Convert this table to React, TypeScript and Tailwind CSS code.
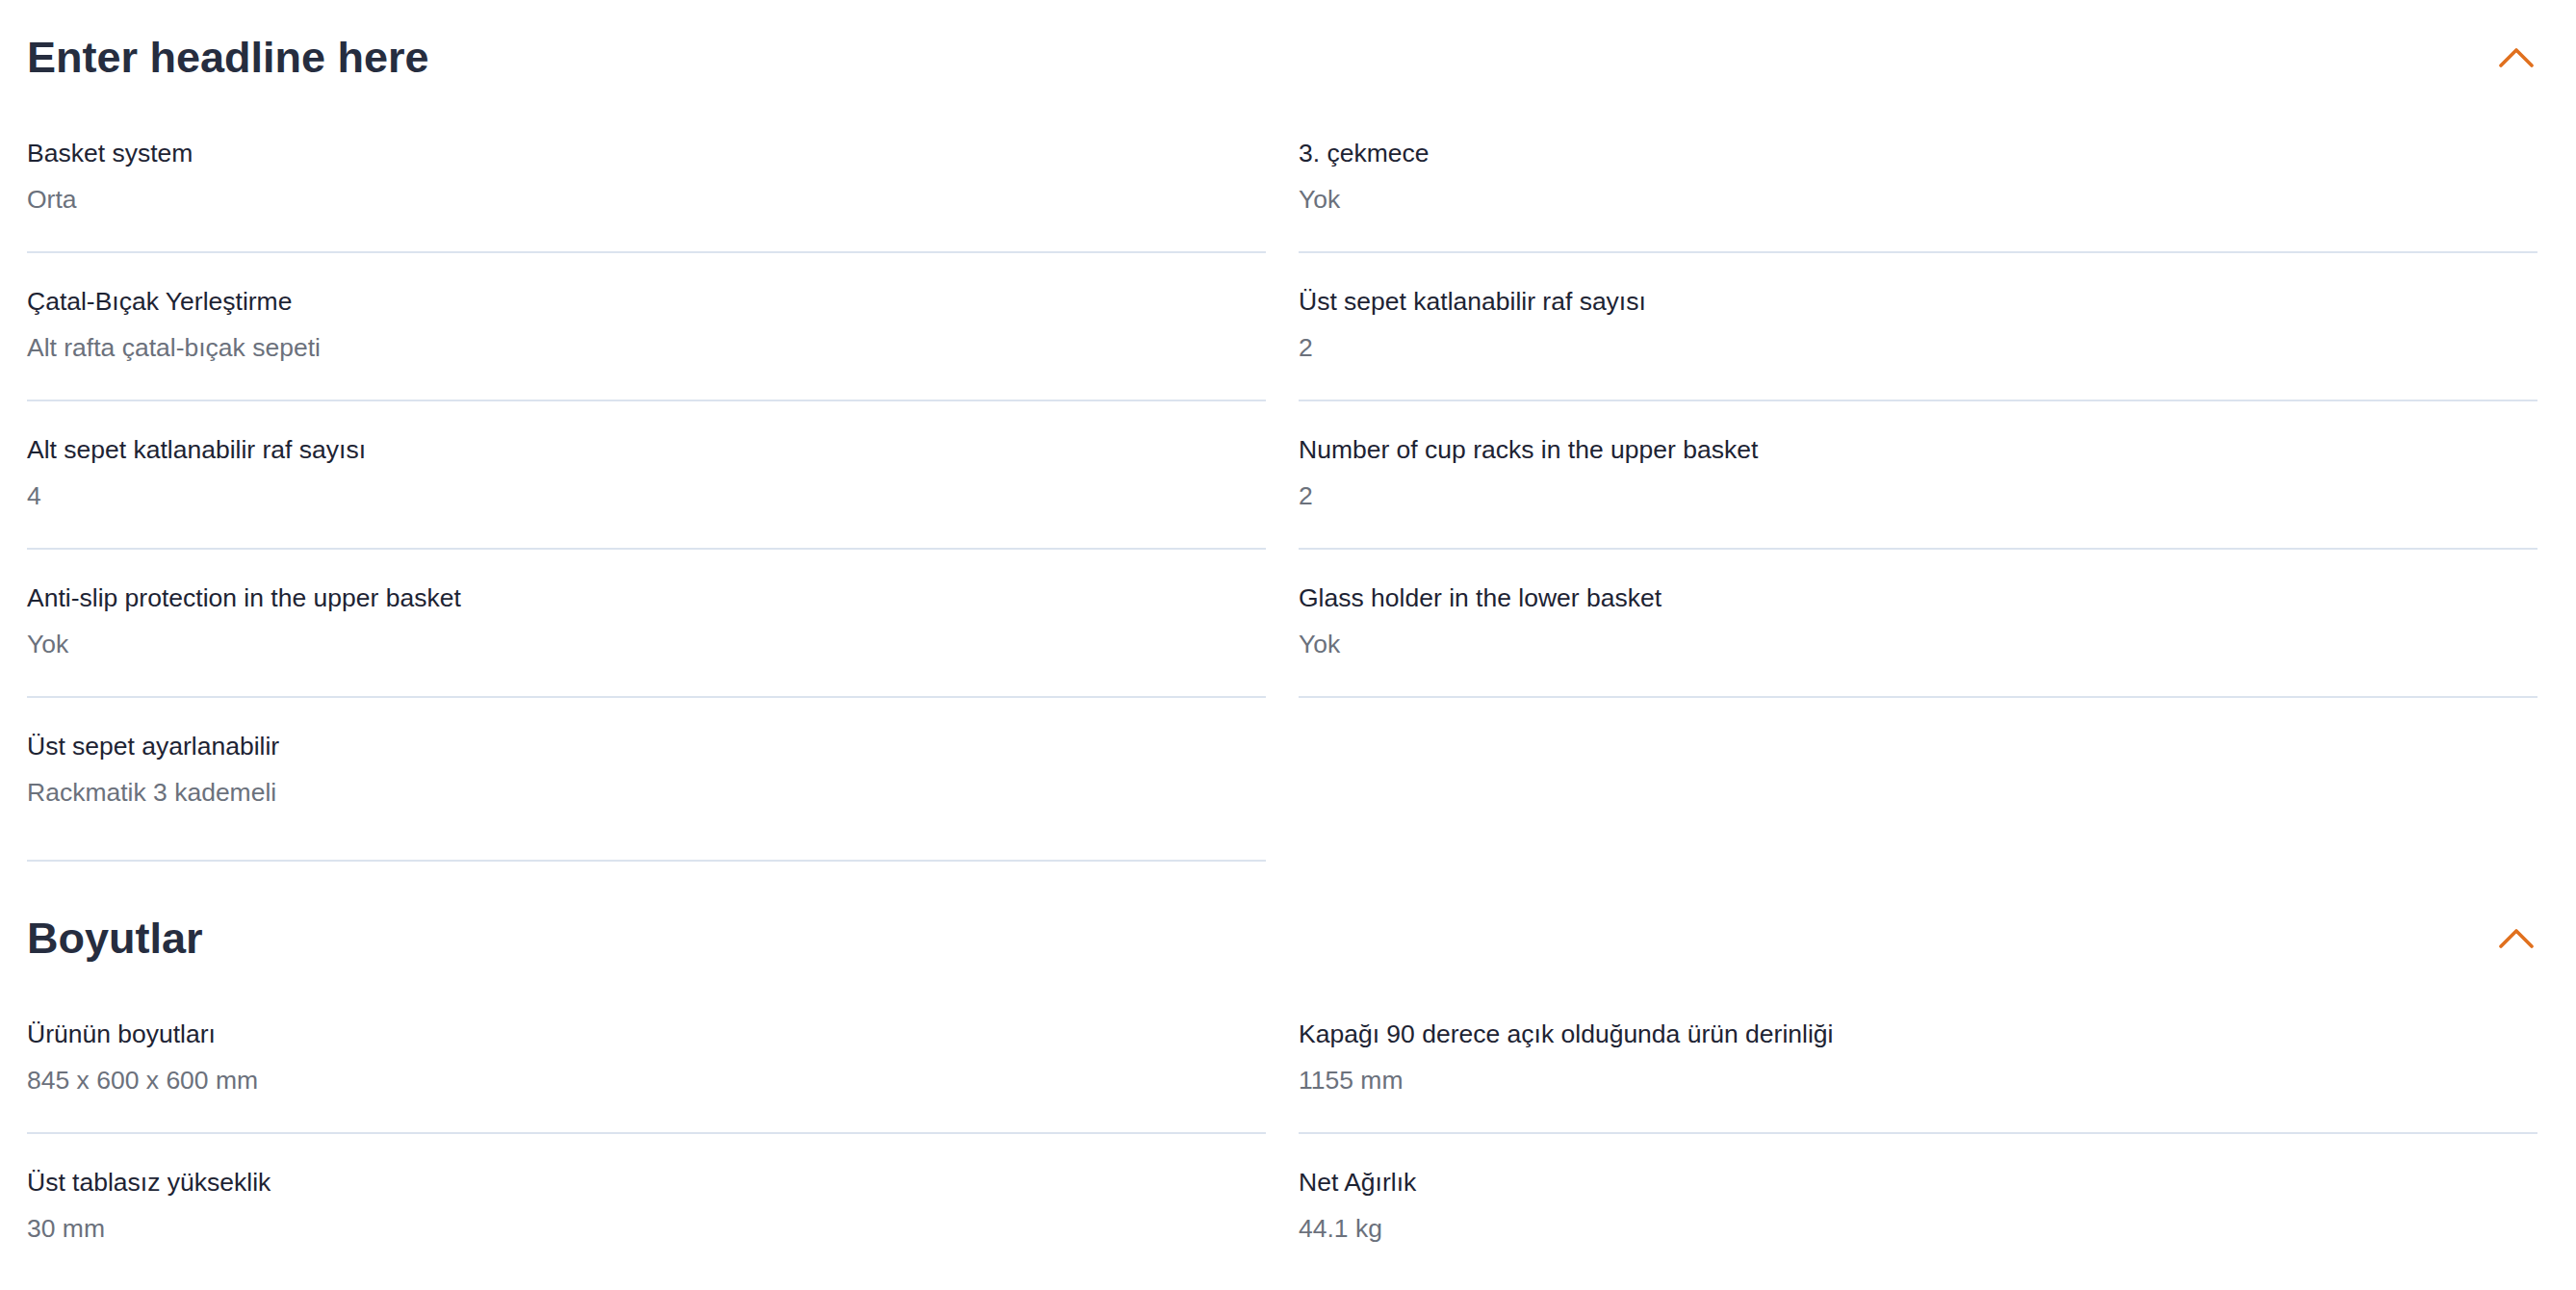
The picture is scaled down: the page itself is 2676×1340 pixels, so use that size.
import React from 'react';

type Spec = { label: string; value: string };

const basketSpecs: Spec[] = [
  { label: 'Basket system', value: 'Orta' },
  { label: '3. çekmece', value: 'Yok' },
  { label: 'Çatal-Bıçak Yerleştirme', value: 'Alt rafta çatal-bıçak sepeti' },
  { label: 'Üst sepet katlanabilir raf sayısı', value: '2' },
  { label: 'Alt sepet katlanabilir raf sayısı', value: '4' },
  { label: 'Number of cup racks in the upper basket', value: '2' },
  { label: 'Anti-slip protection in the upper basket', value: 'Yok' },
  { label: 'Glass holder in the lower basket', value: 'Yok' },
  { label: 'Üst sepet ayarlanabilir', value: 'Rackmatik 3 kademeli' },
];

const dimensionSpecs: Spec[] = [
  { label: 'Ürünün boyutları', value: '845 x 600 x 600 mm' },
  { label: 'Kapağı 90 derece açık olduğunda ürün derinliği', value: '1155 mm' },
  { label: 'Üst tablasız yükseklik', value: '30 mm' },
  { label: 'Net Ağırlık', value: '44.1 kg' },
];

const ChevronUp = () => (
  <svg width="36" height="20" viewBox="0 0 36 20" fill="none" className="mr-[4px] shrink-0">
    <polyline
      points="2,18 18,2 34,18"
      stroke="#e0701e"
      strokeWidth="3.6"
      strokeLinecap="round"
      strokeLinejoin="round"
    />
  </svg>
);

const SpecSection: React.FC<{ title: string; specs: Spec[]; first?: boolean }> = ({
  title,
  specs,
  first,
}) => {
  const lastRowStart = specs.length - (specs.length % 2 === 0 ? 2 : 1);
  return (
    <section className={first ? 'pt-[32px]' : 'pt-[52px]'}>
      <div className="flex items-center justify-between">
        <h2 className="text-[45px] leading-[56px] font-bold text-[#262d3f]">{title}</h2>
        <button className="flex items-center">
          <ChevronUp />
        </button>
      </div>

      <div className="mt-[21px] grid grid-cols-2 gap-x-[34px]">
        {specs.map((spec, i) => (
          <div
            key={spec.label}
            className={
              i >= lastRowStart
                ? 'pt-[32px] pb-[52px] border-b-2 border-[#dbe3ee]'
                : 'pt-[32px] pb-[36px] border-b-2 border-[#dbe3ee]'
            }
          >
            <div className="text-[26.5px] leading-[36px] text-[#1d2333]">{spec.label}</div>
            <div className="mt-[12px] text-[26.5px] leading-[36px] text-[#6b717c]">{spec.value}</div>
          </div>
        ))}
      </div>
    </section>
  );
};

export default function App() {
  return (
    <div
      className="min-h-screen bg-white pl-[28px] pr-[40px]"
      style={{ fontFamily: '"Liberation Sans", Arial, sans-serif' }}
    >
      <SpecSection title="Enter headline here" specs={basketSpecs} first />
      <SpecSection title="Boyutlar" specs={dimensionSpecs} />
    </div>
  );
}
